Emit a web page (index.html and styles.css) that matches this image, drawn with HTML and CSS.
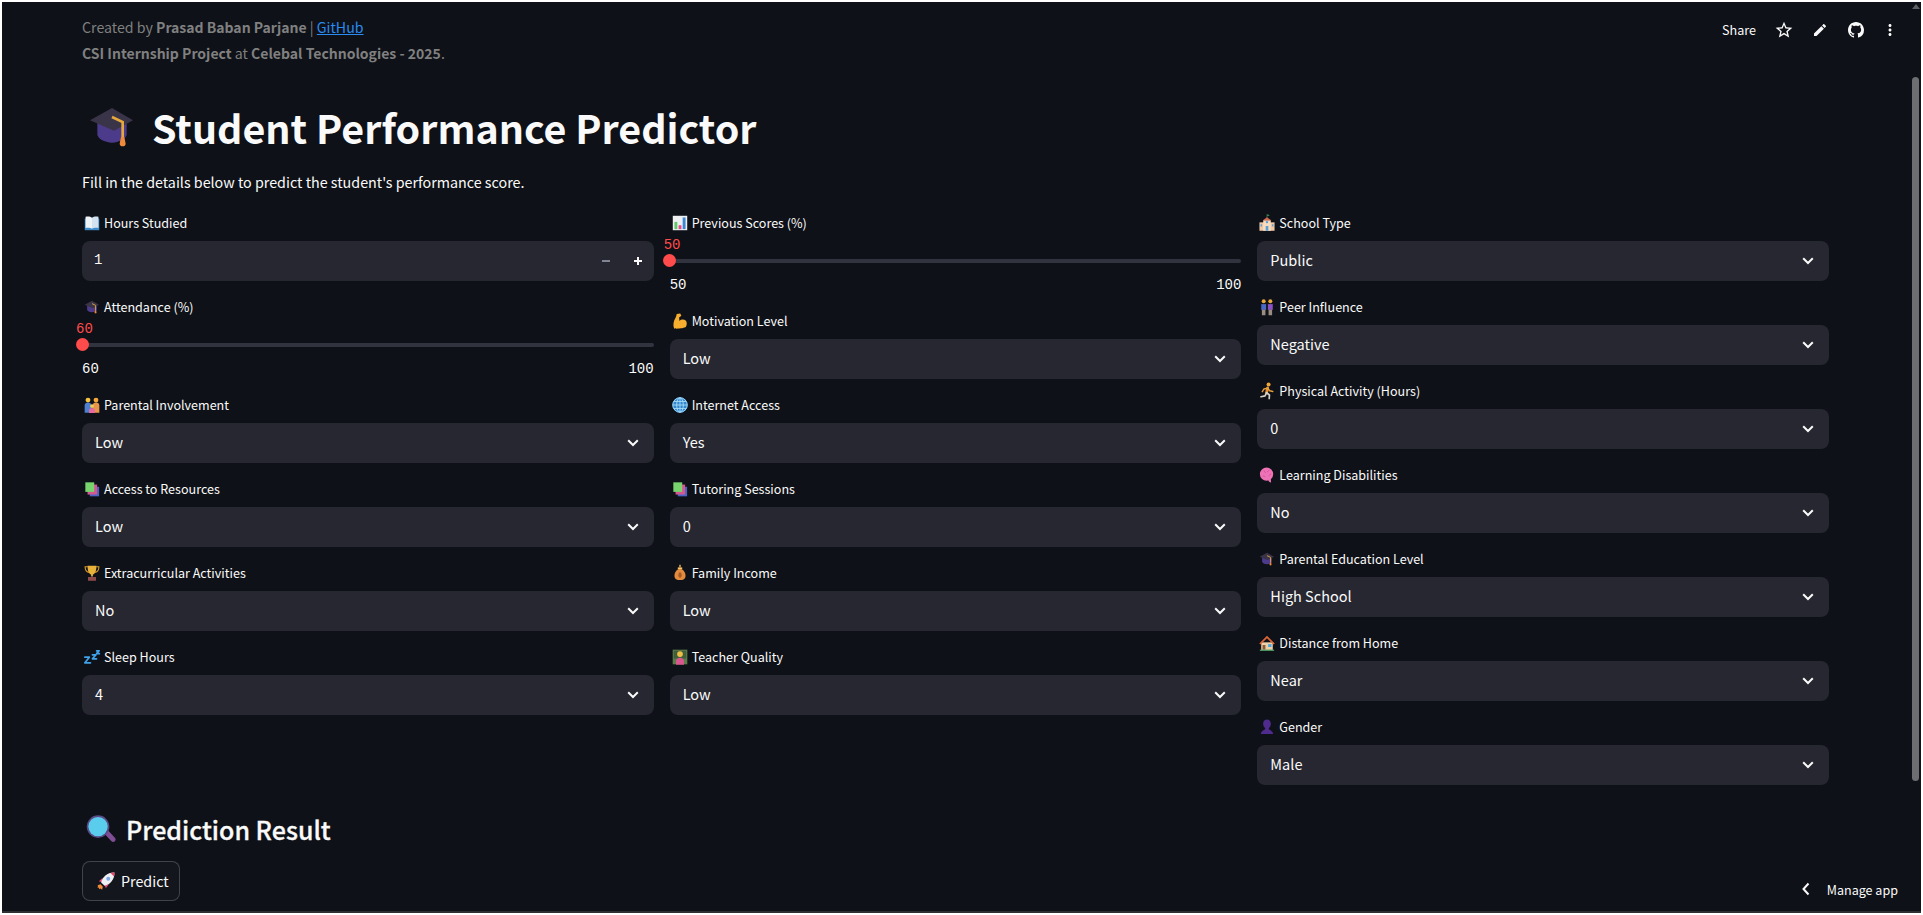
FILE: index.html
```html
<!DOCTYPE html>
<html lang="en">
<head>
<meta charset="utf-8">
<title>Student Performance Predictor</title>
<link rel="stylesheet" href="styles.css">
</head>
<body>
<svg class="defs" aria-hidden="true">
  <symbol id="i-cap" viewBox="0 0 18 18">
    <path d="M4.6 7.6v3.6c0 1.2 2.1 2.5 4.4 2.5s4.4-1.3 4.4-2.5V7.6z" fill="#4c3b8a"/>
    <path d="M9 3.3l6.3 3.7L9.6 10.1 2.4 7z" fill="#3a3448"/>
    <path d="M9 6l3.2 1.500V12" fill="none" stroke="#e6a83c" stroke-width=".8"/>
    <path d="M11.700 12h1l.4 2c0 .5-.4.8-.9.8s-.9-.3-.9-.8z" fill="#ef8a3c"/>
  </symbol>
  <symbol id="i-book" viewBox="0 0 18 18">
    <path d="M2.500 5h13v10.500h-13z" fill="#3f8ccb"/>
    <path d="M3.200 3.400c2-.5 4.500-.3 5.800.8v10c-1.300-1-3.800-1.200-5.800-.8z" fill="#eef3f8"/>
    <path d="M14.800 3.400c-2-.5-4.500-.3-5.800.8v10c1.300-1 3.800-1.200 5.800-.8z" fill="#d2e2f0"/>
  </symbol>
  <symbol id="i-chart" viewBox="0 0 18 18">
    <path d="M2.500 2.500h13v13h-13z" fill="#eef0f2"/>
    <path d="M4 8h2.600v6.500H4z" fill="#5fc96a"/>
    <path d="M7.700 11h2.600v3.500H7.700z" fill="#e8498a"/>
    <path d="M11.400 4h2.600v10.500h-2.600z" fill="#3b86d6"/>
  </symbol>
  <symbol id="i-muscle" viewBox="0 0 18 18">
    <path d="M3.600 15.600c-1-3-.5-7 1.400-9.600.6-.8.8-2 1-3.200l3.200-.5 1 2-2 1.600.3 3c1.500-1.300 4-1.600 5.600-.3 1.300 1 1.300 4 .2 5.600-1 1.400-9.200 2.200-10.700 1.400z" fill="#f7ad2e"/>
  </symbol>
  <symbol id="i-family" viewBox="0 0 18 18">
    <circle cx="5.400" cy="4.600" r="2.200" fill="#f5c242"/>
    <circle cx="12.600" cy="4.600" r="2.200" fill="#f5a83a"/>
    <path d="M2.400 16V9.400c0-1.600 1.200-2.600 3-2.600s3 1 3 2.600V16z" fill="#4e7fd1"/>
    <path d="M9.600 16V9.400c0-1.600 1.200-2.600 3-2.600s3 1 3 2.600V16z" fill="#e8974a"/>
    <circle cx="9" cy="10" r="1.700" fill="#f7cf58"/>
    <path d="M6.400 16.200v-2.400c0-1.200 1.200-2 2.600-2s2.600.8 2.600 2v2.400z" fill="#e86aa0"/>
  </symbol>
  <symbol id="i-globe" viewBox="0 0 18 18">
    <circle cx="9" cy="9" r="6.900" fill="#3186d0"/>
    <g fill="none" stroke="#a9dcf8" stroke-width=".8">
      <circle cx="9" cy="9" r="6.500"/>
      <ellipse cx="9" cy="9" rx="3" ry="6.500"/>
      <path d="M9 2.500v13M2.500 9h13M3.400 5.800h11.200M3.400 12.200h11.200"/>
    </g>
  </symbol>
  <symbol id="i-books" viewBox="0 0 18 18">
    <path d="M7 7h8.400v8.600H7z" fill="#4a63c4"/>
    <path d="M5 5h8.600v9H5z" fill="#d4578f"/>
    <path d="M3 3h8v8.600H3z" fill="#78d56e"/>
  </symbol>
  <symbol id="i-trophy" viewBox="0 0 18 18">
    <path d="M5.200 3.400H2.800c0 3 1 4.600 3.400 5M12.800 3.400h2.400c0 3-1 4.600-3.400 5" fill="none" stroke="#d99a2b" stroke-width="1"/>
    <path d="M5 2.400h8c0 4.400-1 7.200-3.200 8v1.800H8.200v-1.800C6 9.600 5 6.800 5 2.400z" fill="#e9b23a"/>
    <path d="M5.400 12.600h7.200V16H5.400z" fill="#8c4a4a"/>
  </symbol>
  <symbol id="i-bag" viewBox="0 0 18 18">
    <path d="M8.400 1.600h1.200v2.200H8.400z" fill="#f0c060"/>
    <path d="M7 4h4l-.6 1.400c2.400 1.400 3.600 3.600 3.600 6 0 2.800-2 4-5 4s-5-1.200-5-4c0-2.400 1.200-4.600 3.600-6z" fill="#e38a3c"/>
    <path d="M7 4.200h4v1.100H7z" fill="#f7d070"/>
    <ellipse cx="9" cy="11" rx="1.500" ry="2.600" fill="#a85a24"/>
  </symbol>
  <symbol id="i-sleep" viewBox="0 0 18 18">
    <g fill="none" stroke="#3fa2ea" stroke-width="1.600" stroke-linecap="round" stroke-linejoin="round">
      <path d="M2.600 9.200h4L2.600 14.200h5"/>
      <path d="M9.400 7h3.200l-3.200 3.600h3.600"/>
      <path d="M13.200 3.400h2.200l-2.200 2.600h2.400"/>
    </g>
  </symbol>
  <symbol id="i-teacher" viewBox="0 0 18 18">
    <path d="M2.400 2.400h13.200v13.200H2.400z" fill="#5d7a49"/>
    <path d="M3.400 3.400h11.200v7H3.400z" fill="#3f5f3c"/>
    <circle cx="9" cy="6.400" r="2.600" fill="#efbe45"/>
    <path d="M5.400 16v-3.400c0-1.900 1.600-3 3.600-3s3.600 1.100 3.600 3V16z" fill="#d8578e"/>
  </symbol>
  <symbol id="i-school" viewBox="0 0 18 18">
    <path d="M8.700 1.200h.6V5h-.6z" fill="#5c7c50"/>
    <path d="M9.300 1.200l2.200.9-2.200.9z" fill="#3fa060"/>
    <path d="M2.200 8.400h13.600V16H2.200z" fill="#f0c8a4"/>
    <path d="M5.600 6.400h6.800V16H5.600z" fill="#f7dcc0"/>
    <path d="M5 6.800L9 3.800l4 3z" fill="#cf6a50"/>
    <circle cx="9" cy="8.200" r="1.100" fill="#5a9fd6"/>
    <path d="M7.800 11.600h2.400V16H7.800zM3.200 10.200h1.400v2H3.200zM13.400 10.200h1.400v2h-1.400z" fill="#5a9fd6"/>
  </symbol>
  <symbol id="i-peers" viewBox="0 0 18 18">
    <circle cx="6" cy="3.800" r="1.800" fill="#e8a83c"/>
    <circle cx="12" cy="3.800" r="1.800" fill="#e8a83c"/>
    <path d="M3.800 6.400h4.400v5.200H3.800z" fill="#4a6ac8"/>
    <path d="M9.800 6.400h4.400v5.200H9.800z" fill="#8a52c4"/>
    <path d="M4.400 11.400h3.200v5H4.400zM10.400 11.400h3.200v5h-3.200z" fill="#9a8c80"/>
  </symbol>
  <symbol id="i-runner" viewBox="0 0 18 18">
    <circle cx="10.400" cy="3.200" r="1.800" fill="#f0a83c"/>
    <g fill="none" stroke-linecap="round" stroke-linejoin="round">
      <path d="M9.600 6.200L8.600 10.600" stroke="#e8912e" stroke-width="2.600"/>
      <path d="M9.600 6.400l-3.400.8-1.400 2.400M9.800 6.600l1.600 2.200 2.800.6" stroke="#e8a03c" stroke-width="1.300"/>
      <path d="M8.600 10.600l2.600 2-.2 3.200" stroke="#d8d2c8" stroke-width="1.500"/>
      <path d="M8.600 10.600l-1.400 2.800-3.600.8" stroke="#d8d2c8" stroke-width="1.500"/>
    </g>
  </symbol>
  <symbol id="i-brain" viewBox="0 0 18 18">
    <g fill="#ee72b6">
      <circle cx="8.600" cy="8.200" r="6"/>
      <path d="M10 12.500h2.400l.3 3.200c-1.400 0-2.500-1-2.700-3.200z"/>
    </g>
    <path d="M6 5.400c1 .2 1.600 1 1.600 2M11 4.400c-.4 1-1.200 1.600-2 1.600M12.800 8c-1 .2-1.800 1-1.800 2M5 10c1-.3 1.900 0 2.400.8" fill="none" stroke="#c84590" stroke-width=".6"/>
  </symbol>
  <symbol id="i-house" viewBox="0 0 18 18">
    <path d="M3.800 8.400h10.400v6.800H3.800z" fill="#eed0a8"/>
    <path d="M2 9.400L9 2.400l7 7-1.200 1L9 4.800l-5.800 5.600z" fill="#dd6438"/>
    <path d="M5 10.800h2.600V15H5z" fill="#8a5a3c"/>
    <path d="M10 10h3v2.600h-3z" fill="#4aa8e0"/>
    <path d="M2.600 15h12.800v1H2.600z" fill="#5cb870"/>
  </symbol>
  <symbol id="i-person" viewBox="0 0 18 18">
    <path d="M9 2.200c2.200 0 3.500 1.600 3.500 3.700 0 1.700-.8 3.300-1.800 4.100v.9c0 .8 3.800 1.500 3.800 4.500H3.500c0-3 3.800-3.700 3.800-4.500V10c-1-.8-1.800-2.400-1.800-4.100 0-2.100 1.300-3.700 3.500-3.700z" fill="#4e2b8c"/>
  </symbol>
  <symbol id="i-lens" viewBox="0 0 18 18">
    <path d="M10.800 11l1.700-1.700 3.400 3.600c.6.600.6 1.300.1 1.800s-1.300.5-1.800-.1z" fill="#7f4d93"/>
    <circle cx="7.800" cy="7.600" r="5.500" fill="#5a4a86"/>
    <circle cx="7.800" cy="7.600" r="4.700" fill="#5accec"/>
  </symbol>
  <symbol id="i-rocket" viewBox="0 0 18 18">
    <path d="M1.300 13l2.600-.7 2 2-.7 2.600-1.300-1-1.100.6-.3-1.300-1.300-.3.600-1.100z" fill="#ee8a3a"/>
    <path d="M5.600 6.900L2.400 9.600l3 1zM11 12.300L8.400 15.600l-1-3z" fill="#e84a7a"/>
    <path d="M4.400 10.700C5.600 6 9.600 2 15.800 2.200c.2 6.200-3.800 10.200-8.500 11.400z" fill="#eef0f4"/>
    <path d="M12.400 2.500c1-.2 2.200-.3 3.400-.3 0 1.200-.1 2.400-.3 3.400z" fill="#e8466e"/>
    <circle cx="10.500" cy="7.500" r="1.700" fill="#7fa8e8"/>
  </symbol>
  <symbol id="i-chev" viewBox="0 0 12 8">
    <path d="M1.200 1.300L6 6l4.800-4.700" fill="none" stroke="#fafafa" stroke-width="2"/>
  </symbol>
</svg>

<div class="frame">
  <main class="main">
    <p class="credit">Created by <strong>Prasad Baban Parjane</strong> | <a href="#">GitHub</a></p>
    <p class="credit"><strong>CSI Internship Project</strong> at <strong>Celebal Technologies - 2025</strong>.</p>

    <h1 class="title"><svg class="emoji-xl"><use href="#i-cap"/></svg>Student Performance Predictor</h1>
    <p class="intro">Fill in the details below to predict the student's performance score.</p>

    <div class="columns">
      <div class="col">
        <div class="field">
          <label class="label"><svg class="emoji"><use href="#i-book"/></svg>Hours Studied</label>
          <div class="control number">
            <span class="number-value">1</span>
            <span class="step"><svg class="step-icon muted" viewBox="0 0 10 10"><path d="M1 5h8"/></svg></span>
            <span class="step"><svg class="step-icon" viewBox="0 0 10 10"><path d="M1 5h8M5 1v8"/></svg></span>
          </div>
        </div>
        <div class="field">
          <label class="label"><svg class="emoji"><use href="#i-cap"/></svg>Attendance (%)</label>
          <div class="slider">
            <div class="track"><span class="thumb"></span><span class="thumb-value">60</span></div>
            <div class="ticks"><span>60</span><span>100</span></div>
          </div>
        </div>
        <div class="field">
          <label class="label"><svg class="emoji"><use href="#i-family"/></svg>Parental Involvement</label>
          <div class="control select"><span>Low</span><svg class="chev"><use href="#i-chev"/></svg></div>
        </div>
        <div class="field">
          <label class="label"><svg class="emoji"><use href="#i-books"/></svg>Access to Resources</label>
          <div class="control select"><span>Low</span><svg class="chev"><use href="#i-chev"/></svg></div>
        </div>
        <div class="field">
          <label class="label"><svg class="emoji"><use href="#i-trophy"/></svg>Extracurricular Activities</label>
          <div class="control select"><span>No</span><svg class="chev"><use href="#i-chev"/></svg></div>
        </div>
        <div class="field">
          <label class="label"><svg class="emoji"><use href="#i-sleep"/></svg>Sleep Hours</label>
          <div class="control select"><span>4</span><svg class="chev"><use href="#i-chev"/></svg></div>
        </div>
      </div>

      <div class="col">
        <div class="field">
          <label class="label"><svg class="emoji"><use href="#i-chart"/></svg>Previous Scores (%)</label>
          <div class="slider">
            <div class="track"><span class="thumb"></span><span class="thumb-value">50</span></div>
            <div class="ticks"><span>50</span><span>100</span></div>
          </div>
        </div>
        <div class="field">
          <label class="label"><svg class="emoji"><use href="#i-muscle"/></svg>Motivation Level</label>
          <div class="control select"><span>Low</span><svg class="chev"><use href="#i-chev"/></svg></div>
        </div>
        <div class="field">
          <label class="label"><svg class="emoji"><use href="#i-globe"/></svg>Internet Access</label>
          <div class="control select"><span>Yes</span><svg class="chev"><use href="#i-chev"/></svg></div>
        </div>
        <div class="field">
          <label class="label"><svg class="emoji"><use href="#i-books"/></svg>Tutoring Sessions</label>
          <div class="control select"><span>0</span><svg class="chev"><use href="#i-chev"/></svg></div>
        </div>
        <div class="field">
          <label class="label"><svg class="emoji"><use href="#i-bag"/></svg>Family Income</label>
          <div class="control select"><span>Low</span><svg class="chev"><use href="#i-chev"/></svg></div>
        </div>
        <div class="field">
          <label class="label"><svg class="emoji"><use href="#i-teacher"/></svg>Teacher Quality</label>
          <div class="control select"><span>Low</span><svg class="chev"><use href="#i-chev"/></svg></div>
        </div>
      </div>

      <div class="col">
        <div class="field">
          <label class="label"><svg class="emoji"><use href="#i-school"/></svg>School Type</label>
          <div class="control select"><span>Public</span><svg class="chev"><use href="#i-chev"/></svg></div>
        </div>
        <div class="field">
          <label class="label"><svg class="emoji"><use href="#i-peers"/></svg>Peer Influence</label>
          <div class="control select"><span>Negative</span><svg class="chev"><use href="#i-chev"/></svg></div>
        </div>
        <div class="field">
          <label class="label"><svg class="emoji"><use href="#i-runner"/></svg>Physical Activity (Hours)</label>
          <div class="control select"><span>0</span><svg class="chev"><use href="#i-chev"/></svg></div>
        </div>
        <div class="field">
          <label class="label"><svg class="emoji"><use href="#i-brain"/></svg>Learning Disabilities</label>
          <div class="control select"><span>No</span><svg class="chev"><use href="#i-chev"/></svg></div>
        </div>
        <div class="field">
          <label class="label"><svg class="emoji"><use href="#i-cap"/></svg>Parental Education Level</label>
          <div class="control select"><span>High School</span><svg class="chev"><use href="#i-chev"/></svg></div>
        </div>
        <div class="field">
          <label class="label"><svg class="emoji"><use href="#i-house"/></svg>Distance from Home</label>
          <div class="control select"><span>Near</span><svg class="chev"><use href="#i-chev"/></svg></div>
        </div>
        <div class="field">
          <label class="label"><svg class="emoji"><use href="#i-person"/></svg>Gender</label>
          <div class="control select"><span>Male</span><svg class="chev"><use href="#i-chev"/></svg></div>
        </div>
      </div>
    </div>

    <h3 class="result"><svg class="emoji-lg"><use href="#i-lens"/></svg>Prediction Result</h3>
    <button class="predict" type="button"><svg class="emoji-btn"><use href="#i-rocket"/></svg>Predict</button>
  </main>

  <header class="toolbar">
    <span class="share">Share</span>
    <span class="tool"><svg class="tool-icon star" viewBox="0 0 24 24"><path d="M22 9.240l-7.190-.62L12 2 9.190 8.630 2 9.240l5.460 4.730L5.820 21 12 17.270 18.180 21l-1.630-7.030L22 9.240zM12 15.400l-3.760 2.270 1-4.280-3.320-2.880 4.380-.38L12 6.100l1.710 4.040 4.380.38-3.320 2.880 1 4.280L12 15.400z"/></svg></span>
    <span class="tool"><svg class="tool-icon pencil" viewBox="0 0 24 24"><path d="M3 17.250V21h3.750L17.810 9.940l-3.750-3.750L3 17.250zM20.710 7.040c.39-.39.39-1.020 0-1.410l-2.340-2.340c-.39-.39-1.020-.39-1.410 0l-1.830 1.830 3.750 3.750 1.830-1.830z"/></svg></span>
    <span class="tool"><svg class="tool-icon github" viewBox="0 0 16 16"><path d="M8 0C3.580 0 0 3.580 0 8c0 3.540 2.290 6.530 5.470 7.590.4.070.55-.17.55-.38 0-.19-.01-.82-.01-1.490-2.010.37-2.530-.49-2.690-.94-.09-.23-.48-.94-.82-1.130-.28-.15-.68-.52-.01-.53.63-.01 1.080.58 1.230.82.72 1.210 1.870.87 2.330.66.07-.52.28-.87.51-1.070-1.780-.2-3.640-.89-3.640-3.950 0-.87.31-1.590.82-2.150-.08-.2-.36-1.020.08-2.120 0 0 .67-.21 2.200.82.64-.18 1.320-.27 2-.27.68 0 1.360.09 2 .27 1.530-1.040 2.200-.82 2.200-.82.44 1.100.16 1.920.08 2.120.51.56.82 1.270.82 2.150 0 3.070-1.870 3.750-3.650 3.950.29.25.54.73.54 1.480 0 1.070-.01 1.930-.01 2.200 0 .21.15.46.55.38A8.013 8.013 0 0016 8c0-4.420-3.580-8-8-8z"/></svg></span>
    <span class="tool tool-last"><svg class="tool-icon dots" viewBox="0 0 24 24"><path d="M12 8c1.100 0 2-.9 2-2s-.9-2-2-2-2 .9-2 2 .9 2 2 2zm0 2c-1.100 0-2 .9-2 2s.9 2 2 2 2-.9 2-2-.9-2-2-2zm0 6c-1.100 0-2 .9-2 2s.9 2 2 2 2-.9 2-2-.9-2-2-2z"/></svg></span>
  </header>

  <div class="manage">
    <svg class="manage-chev" viewBox="0 0 8 14"><path d="M6.500 1.500L1.500 7l5 5.500"/></svg>
    <span>Manage app</span>
  </div>

  <div class="scrollbar">
    <span class="scroll-arrow"></span>
    <span class="scroll-thumb"></span>
  </div>
</div>
</body>
</html>
```
FILE: styles.css
```css
* { box-sizing: border-box; }

html, body { margin: 0; padding: 0; height: 100%; }

body {
  background: #ffffff;
  font-family: "Noto Sans CJK SC", "Noto Sans", sans-serif;
  color: #fafafa;
  overflow: hidden;
}

.defs { position: absolute; width: 0; height: 0; }

.frame {
  position: relative;
  margin: 2px;
  height: 911px;
  background: #0e1117;
  border-bottom: 2px solid #2e2f33;
  overflow: hidden;
}

.main { padding: 13px 92px 0 80px; }

.credit {
  margin: 0;
  font-size: 14.2px;
  line-height: 25.6px;
  color: #808080;
}

.credit strong { font-size: 14px; }

.credit a { color: #2a8bf2; text-decoration: underline; }

.title {
  display: flex;
  align-items: center;
  margin: 31px 0 0;
  height: 60px;
  font-size: 39.4px;
  font-weight: 700;
  line-height: 60px;
  color: #fafafa;
}

.emoji-xl { width: 60px; height: 60px; margin-right: 10px; flex: none; }

.intro {
  margin: 12px 0 18px;
  font-size: 14.3px;
  line-height: 25.6px;
}

.columns { display: flex; gap: 16px; }

.col { flex: 1 1 0; min-width: 0; display: flex; flex-direction: column; gap: 16px; }

.label {
  display: flex;
  align-items: center;
  height: 28px;
  padding-bottom: 7px;
  font-size: 12.55px;
  line-height: 20px;
  color: #fafafa;
}

.emoji { width: 20px; height: 20px; margin-right: 2px; flex: none; }

.control {
  display: flex;
  align-items: center;
  height: 40px;
  border-radius: 8px;
  background: #262730;
  font-size: 14.5px;
}

.select { justify-content: space-between; padding: 0 15px 2px 13px; }

.chev { width: 12px; height: 8px; flex: none; margin-top: 2px; }

.number { padding-left: 12px; }

.number-value {
  flex: 1;
  margin-top: -2px;
  font-family: "Liberation Mono", monospace;
  font-size: 14px;
}

.step {
  display: flex;
  align-items: center;
  justify-content: center;
  width: 32px;
  height: 40px;
}

.step-icon { width: 10px; height: 10px; fill: none; stroke: #fafafa; stroke-width: 2; }

.step-icon.muted { stroke: #808495; }

.slider { height: 54px; padding-top: 18px; }

.track {
  position: relative;
  height: 4px;
  border-radius: 2px;
  background: #31333f;
}

.thumb {
  position: absolute;
  left: -6.5px;
  top: -4.5px;
  width: 13px;
  height: 13px;
  border-radius: 50%;
  background: #ff4b4b;
}

.thumb-value {
  position: absolute;
  left: -6px;
  top: -24px;
  font-family: "Liberation Mono", monospace;
  font-size: 14px;
  line-height: 20px;
  color: #ff4b4b;
}

.ticks {
  display: flex;
  justify-content: space-between;
  margin-top: 12px;
  font-family: "Liberation Mono", monospace;
  font-size: 14px;
  line-height: 20px;
  color: #fafafa;
}

.result {
  display: flex;
  align-items: center;
  height: 37px;
  margin: 26px 0 13px;
  font-size: 25px;
  font-weight: 500;
  line-height: 37px;
  color: #fafafa;
  -webkit-text-stroke: 0.3px #fafafa;
}

.emoji-lg { width: 37px; height: 37px; margin-right: 7px; flex: none; }

.predict {
  display: inline-flex;
  align-items: center;
  height: 40px;
  width: 98px;
  padding: 0 0 0 13px;
  border: 1px solid rgba(250, 250, 250, 0.2);
  border-radius: 8px;
  background: #13161d;
  color: #fafafa;
  font-family: inherit;
  font-size: 14.3px;
}

.emoji-btn { width: 21px; height: 21px; margin-right: 4px; flex: none; }

.toolbar {
  position: absolute;
  top: 10px;
  right: 15px;
  display: flex;
  align-items: center;
  height: 36px;
}

.share { margin: 0 10px 2px 0; font-size: 12.6px; }

.tool {
  display: flex;
  align-items: center;
  justify-content: center;
  width: 36px;
  height: 36px;
}

.tool-last { width: 32px; }

.tool-icon { fill: #fafafa; }

.star { width: 20px; height: 20px; }

.pencil { width: 16px; height: 16px; }

.github { width: 16px; height: 16px; }

.dots { width: 18px; height: 18px; }

.manage {
  position: absolute;
  right: 23px;
  bottom: 10px;
  display: flex;
  align-items: center;
  gap: 17px;
  height: 24px;
  font-size: 12.55px;
}

.manage-chev { width: 8px; height: 14px; fill: none; stroke: #fafafa; stroke-width: 2; }

.scrollbar {
  position: absolute;
  top: 0;
  right: 1px;
  bottom: 0;
  width: 8px;
}

.scroll-arrow {
  position: absolute;
  top: 2px;
  left: 0;
  width: 0;
  height: 0;
  border-left: 4px solid transparent;
  border-right: 4px solid transparent;
  border-bottom: 5px solid #5f6064;
}

.scroll-thumb {
  position: absolute;
  top: 75px;
  left: 0;
  width: 7px;
  height: 704px;
  border-radius: 4px;
  background: #6d6e72;
}
```
